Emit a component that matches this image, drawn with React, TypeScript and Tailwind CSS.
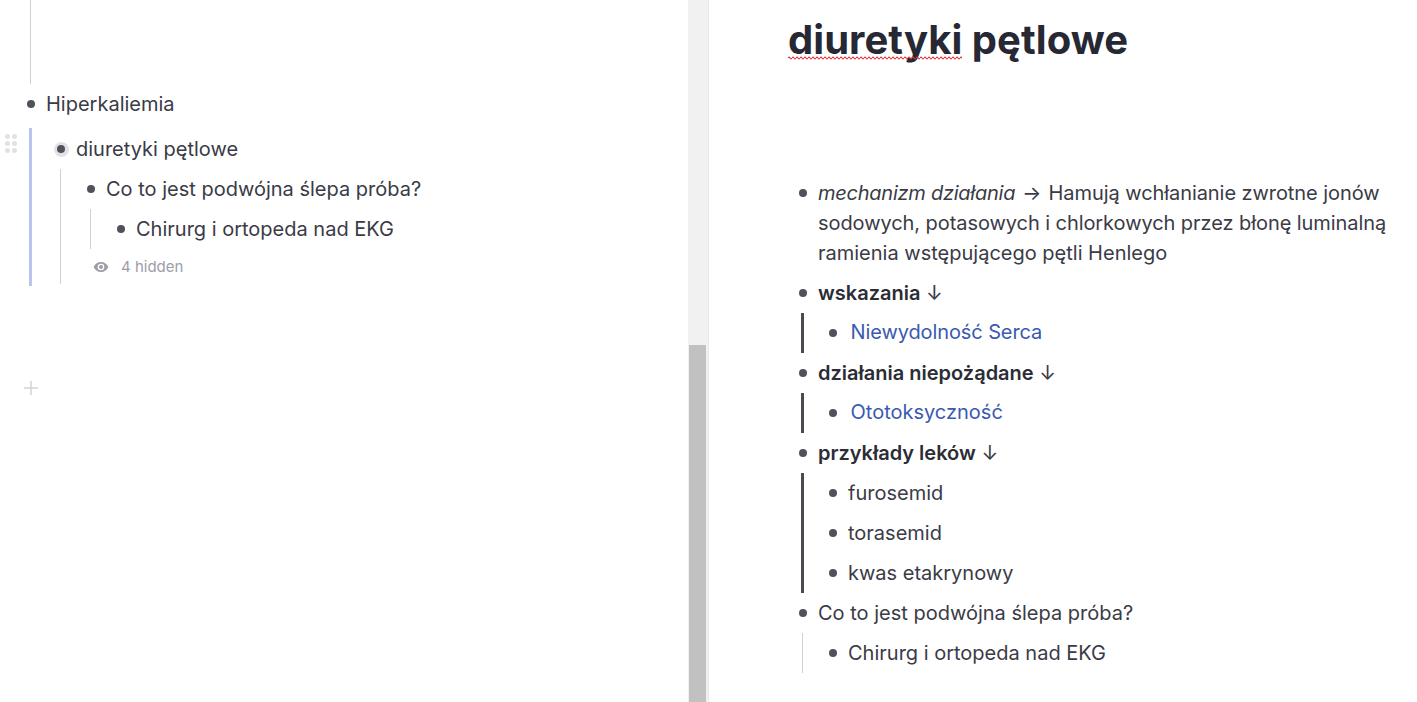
const font = { fontFamily: "Inter, sans-serif" };

function Dot({ halo }: { halo?: boolean }) {
  return (
    <span className="flex h-[18px] w-[18px] shrink-0 items-center justify-center">
      <span className={`flex h-[15px] w-[15px] items-center justify-center rounded-full ${halo ? "bg-[#e2e2e6]" : ""}`}>
        <span className="h-2 w-2 rounded-full bg-[#50515a]" />
      </span>
    </span>
  );
}

function LeftRow({ text, halo }: { text: string; halo?: boolean }) {
  return (
    <div className="flex h-10 items-center">
      <Dot halo={halo} />
      <span className="ml-[6px]">{text}</span>
    </div>
  );
}

function Grip() {
  return (
    <div className="absolute left-[5px] top-[134px] grid grid-cols-2 gap-[2px]">
      {[0, 1, 2, 3, 4, 5].map((i) => (
        <span key={i} className="h-[5px] w-[5px] rounded-full bg-[#e2e2e6]" />
      ))}
    </div>
  );
}

function OutlinePane() {
  return (
    <div className="relative w-[688px] shrink-0">
      <Grip />
      <div className="ml-[30px] h-[84px] border-l border-[#cfcfd4]" />
      <div className="ml-[22px]">
        <LeftRow text="Hiperkaliemia" />
      </div>
      <div className="ml-[29px] mt-1 border-l-[3px] border-[#b7c4ec] pt-px pb-[2px]">
        <div className="ml-[20px]">
          <LeftRow text="diuretyki pętlowe" halo />
        </div>
        <div className="ml-[28px] border-l border-[#cfcfd4]">
          <div className="ml-[21px]">
            <LeftRow text="Co to jest podwójna ślepa próba?" />
          </div>
          <div className="ml-[29px] border-l border-[#cfcfd4]">
            <div className="ml-[21px]">
              <LeftRow text="Chirurg i ortopeda nad EKG" />
            </div>
          </div>
          <div className="ml-[32px] flex h-[35px] items-center text-[15px] text-[#9c9da8]">
            <svg width="16" height="16" viewBox="0 0 24 24" fill="currentColor">
              <path d="M12 4.5C7 4.5 2.7 7.6 1 12c1.7 4.4 6 7.5 11 7.5s9.3-3.1 11-7.5c-1.7-4.4-6-7.5-11-7.5zm0 12.5a5 5 0 1 1 0-10 5 5 0 0 1 0 10zm0-8a3 3 0 1 0 0 6 3 3 0 0 0 0-6z" />
            </svg>
            <span className="ml-[12px] mt-px">4 hidden</span>
          </div>
        </div>
      </div>
      <div className="ml-[23px] mt-[94px] text-[#d4d4d8]">
        <svg width="16" height="16" viewBox="0 0 16 16" stroke="currentColor" strokeWidth="1.5">
          <path d="M8 1v14M1 8h14" />
        </svg>
      </div>
    </div>
  );
}

function Scrollbar() {
  return (
    <div className="flex h-[702px] w-[21px] shrink-0 flex-col justify-end border-r border-[#e8e8e8] bg-[#f1f1f1] pl-px pr-[2px]">
      <div className="h-[357px] bg-[#c1c1c1]" />
    </div>
  );
}

function Row({ children }: { children: React.ReactNode }) {
  return (
    <div className="flex py-[5px] leading-[30px]">
      <span className="flex h-[30px] w-[18px] shrink-0 items-center justify-center">
        <span className="h-2 w-2 rounded-full bg-[#50515a]" />
      </span>
      <div className="ml-[6px] min-w-0 flex-1">{children}</div>
    </div>
  );
}

function Nested({ children, thin }: { children: React.ReactNode; thin?: boolean }) {
  return (
    <div className={thin ? "ml-[8px] border-l border-[#cfcfd4] pl-[21px]" : "ml-[7px] border-l-[3px] border-[#4a4b50] pl-[20px]"}>
      {children}
    </div>
  );
}

function NoteLink({ children }: { children: React.ReactNode }) {
  return <span className="ml-[2.5px] inline-block -translate-y-px text-[#3a5ab0]">{children}</span>;
}

// spell-check squiggle, the browser's own one is finer than text-decoration wavy
function Squiggle() {
  return (
    <svg className="absolute bottom-[4px] left-0" width="100%" height="4">
      <defs>
        <pattern id="squiggle" width="4" height="4" patternUnits="userSpaceOnUse">
          <path d="M0 2 Q1 0.4 2 2 T4 2" fill="none" stroke="#d8343f" strokeWidth="1.2" />
        </pattern>
      </defs>
      <rect width="100%" height="4" fill="url(#squiggle)" />
    </svg>
  );
}

function NotePane() {
  return (
    <div className="min-w-0 flex-1 pl-[79px] pr-[20px]">
      <h1 className="flex h-[80px] items-center text-[40px] font-bold tracking-[0.05px] text-[#262833]">
        <span>
          <span className="relative inline-block leading-[48px]">
            diuretyki
            <Squiggle />
          </span>{" "}
          pętlowe
        </span>
      </h1>
      <div className="ml-[6px] mt-[93px]">
        <Row>
          <i className="tracking-[-0.25px]">mechanizm działania</i>
          <span className="mx-[1.5px]"> → </span>
          <span className="tracking-[-0.07px]">
            Hamują wchłanianie zwrotne jonów sodowych, potasowych i chlorkowych przez błonę luminalną
          </span>{" "}
          ramienia wstępującego pętli Henlego
        </Row>
        <Row>
          <b className="font-semibold text-[#2b2c35]">wskazania</b> ↓
        </Row>
        <Nested>
          <Row>
            <NoteLink>
              <span className="tracking-[-0.1px]">Niewydolność Serca</span>
            </NoteLink>
          </Row>
        </Nested>
        <Row>
          <b className="font-semibold text-[#2b2c35]">działania niepożądane</b> ↓
        </Row>
        <Nested>
          <Row>
            <NoteLink>Ototoksyczność</NoteLink>
          </Row>
        </Nested>
        <Row>
          <b className="font-semibold text-[#2b2c35]">przykłady leków</b> ↓
        </Row>
        <Nested>
          <Row>furosemid</Row>
          <Row>torasemid</Row>
          <Row>kwas etakrynowy</Row>
        </Nested>
        <Row>Co to jest podwójna ślepa próba?</Row>
        <Nested thin>
          <Row>Chirurg i ortopeda nad EKG</Row>
        </Nested>
      </div>
    </div>
  );
}

export default function App() {
  return (
    <div className="flex h-[702px] w-[1417px] overflow-hidden bg-white text-[20px] text-[#3a3b46]" style={font}>
      <OutlinePane />
      <Scrollbar />
      <NotePane />
    </div>
  );
}
